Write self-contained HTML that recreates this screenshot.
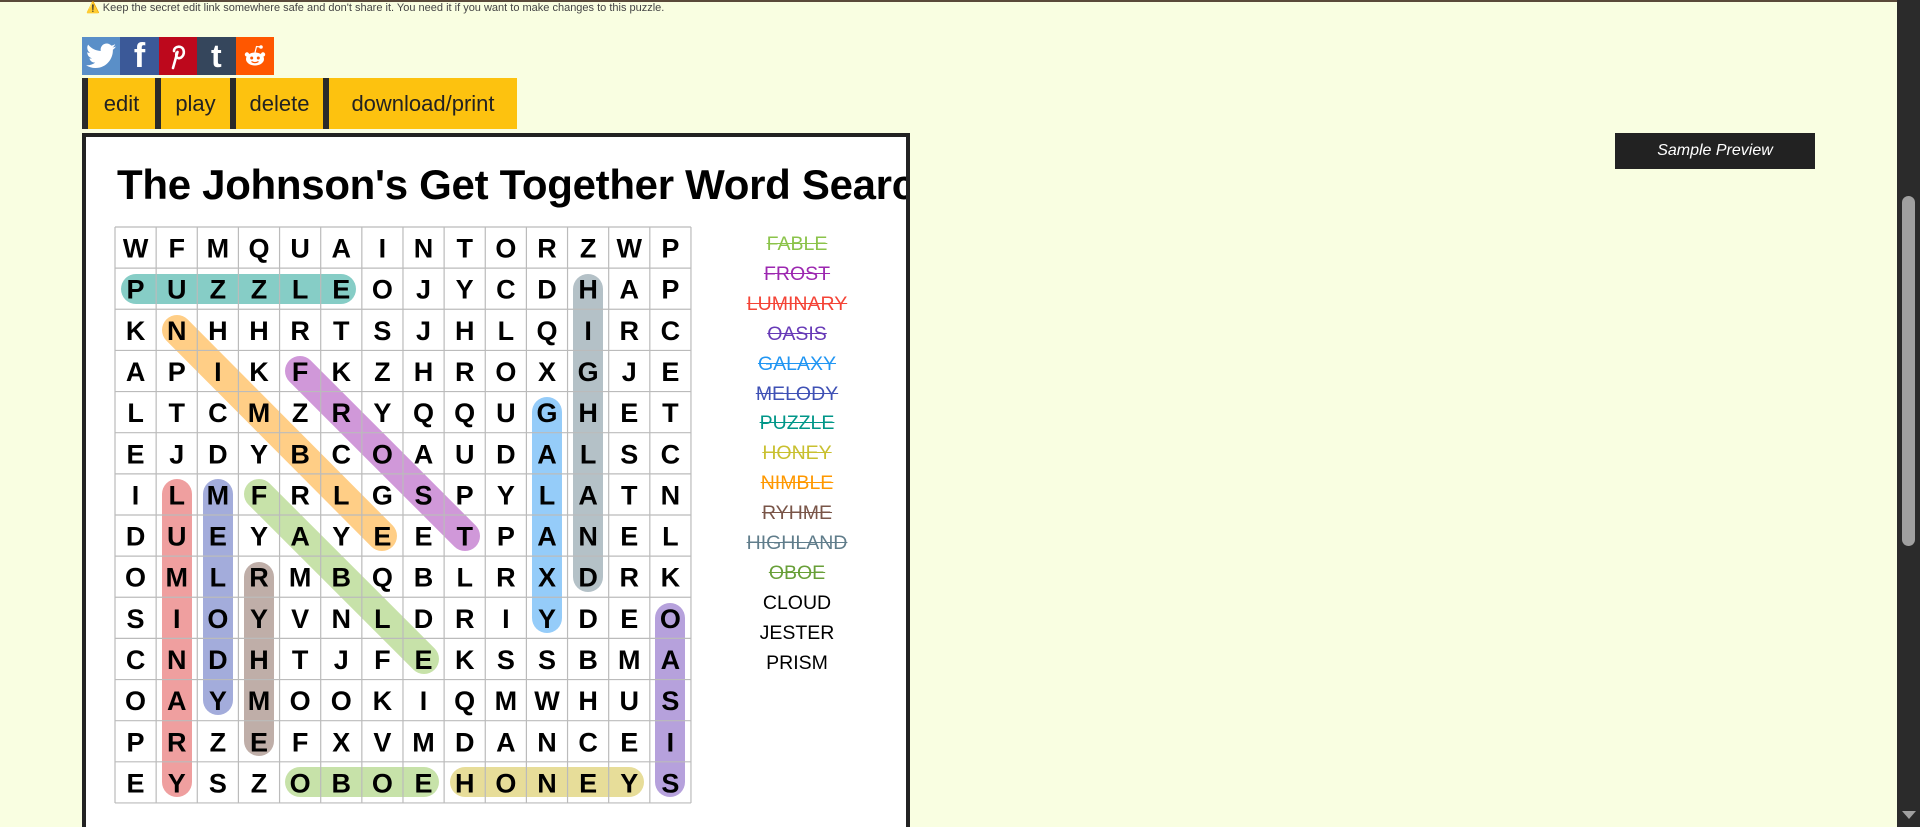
<!DOCTYPE html>
<html><head><meta charset="utf-8"><style>
html,body{margin:0;padding:0;width:1920px;height:827px;overflow:hidden;background:#f9fee1;font-family:"Liberation Sans",sans-serif;}
.abs{position:absolute;}
.topline{left:0;top:0;width:1897px;height:2px;background:#5a4a3a;}
.warn{left:86px;top:1px;font-size:11px;color:#444;}
.soc{top:37px;width:38.4px;height:38px;display:flex;align-items:center;justify-content:center;color:#fff;font-weight:bold;}
.btn{top:78px;height:51px;background:#fdc20f;border-left:6px solid #2a2a2a;box-sizing:border-box;font-size:22px;color:#222;display:flex;align-items:center;justify-content:center;}
.box{left:82px;top:133px;width:828px;height:694px;box-sizing:border-box;border:4px solid #222;border-bottom:none;background:#fff;overflow:hidden;}
.title{position:absolute;left:31px;top:24px;font-size:42px;font-weight:bold;color:#000;white-space:nowrap;letter-spacing:-0.3px;}
.sp{left:1615px;top:133px;width:200px;height:36px;background:#222;color:#fff;font-style:italic;font-size:16px;display:flex;align-items:center;justify-content:center;}
.sb{left:1897px;top:0;width:23px;height:827px;background:#2b2b2b;}
.thumb{left:1902px;top:196px;width:13px;height:350px;background:#a0a0a0;border-radius:7px;}
</style></head><body>
<div class="abs topline"></div>
<div class="abs warn">⚠️ Keep the secret edit link somewhere safe and don't share it. You need it if you want to make changes to this puzzle.</div>

<div class="abs soc" style="left:82px;background:#5a8fc8">
<svg width="30" height="26" viewBox="0 0 24 20"><path fill="#fff" d="M24 2.4c-.9.4-1.8.6-2.8.8 1-.6 1.8-1.6 2.2-2.7-1 .6-2 1-3.1 1.2C19.3.7 18 0 16.6 0c-2.7 0-4.9 2.2-4.9 4.9 0 .4 0 .8.1 1.1C7.7 5.8 4.1 3.9 1.7.9c-.4.7-.7 1.6-.7 2.5 0 1.7.9 3.2 2.2 4.1-.8 0-1.6-.2-2.2-.6v.1c0 2.4 1.7 4.4 3.9 4.8-.4.1-.8.2-1.3.2-.3 0-.6 0-.9-.1.6 2 2.4 3.4 4.6 3.4-1.7 1.3-3.8 2.1-6.1 2.1-.4 0-.8 0-1.2-.1C2.2 18.8 4.8 19.6 7.5 19.6c9.1 0 14-7.5 14-14v-.6c1-.7 1.8-1.6 2.5-2.6z"/></svg></div>
<div class="abs soc" style="left:120.4px;background:#3b5998;font-size:34px;">f</div>
<div class="abs soc" style="left:158.8px;background:#bd081c;">
<svg width="20" height="28" viewBox="0 0 20 28"><path d="M6 9 C6 4 14 3 15.5 8 C17 13 13 17 10 16 C8 15.5 8 13 8.5 11 M9.5 10 L5 26" stroke="#fff" stroke-width="2.6" fill="none" stroke-linecap="round"/></svg></div>
<div class="abs soc" style="left:197.2px;background:#35465c;font-size:32px;">t</div>
<div class="abs soc" style="left:235.6px;background:#ff5700;">
<svg width="24" height="24" viewBox="0 0 24 24"><ellipse cx="12" cy="15" rx="9" ry="6.5" fill="#fff"/><circle cx="4" cy="10.5" r="2.2" fill="#fff"/><circle cx="20" cy="10.5" r="2.2" fill="#fff"/><circle cx="18" cy="3" r="1.8" fill="#fff"/><path d="M12 8.5 L13.5 2.5 L18 3" stroke="#fff" stroke-width="1.2" fill="none"/><circle cx="8.7" cy="14" r="1.5" fill="#ff5700"/><circle cx="15.3" cy="14" r="1.5" fill="#ff5700"/><path d="M8.5 17.5 Q12 19.8 15.5 17.5" stroke="#ff5700" stroke-width="1.2" fill="none"/></svg></div>

<div class="abs btn" style="left:82px;width:73px;">edit</div>
<div class="abs btn" style="left:155px;width:75px;">play</div>
<div class="abs btn" style="left:230px;width:93px;">delete</div>
<div class="abs btn" style="left:323px;width:194px;">download/print</div>

<div class="abs box"><div class="title">The Johnson's Get Together Word Search</div></div>

<svg class="abs" style="left:0;top:0" width="1920" height="827">
<g stroke-linecap="round" stroke-width="30" opacity="0.95">
<line x1="136" y1="289" x2="341" y2="289" stroke="#80cbc4"/>
<line x1="588" y1="289" x2="588" y2="577" stroke="#b0bec5"/>
<line x1="177" y1="330" x2="382" y2="536" stroke="#ffcc80"/>
<line x1="300" y1="371" x2="465" y2="536" stroke="#ce93d8"/>
<line x1="547" y1="412" x2="547" y2="618" stroke="#90caf9"/>
<line x1="177" y1="494" x2="177" y2="782" stroke="#ef9a9a"/>
<line x1="218" y1="494" x2="218" y2="700" stroke="#9fa8da"/>
<line x1="259" y1="494" x2="424" y2="659" stroke="#c5e1a5"/>
<line x1="259" y1="577" x2="259" y2="741" stroke="#bcaaa4"/>
<line x1="670" y1="618" x2="670" y2="782" stroke="#b39ddb"/>
<line x1="300" y1="782" x2="424" y2="782" stroke="#c5e1a5"/>
<line x1="465" y1="782" x2="629" y2="782" stroke="#e6dc94"/>
</g>
<g stroke="#bbb" stroke-width="1.2" id="gl"></g>
<g id="lt" font-family="Liberation Sans" font-weight="bold" font-size="27" text-anchor="middle" fill="#000"></g>
</svg>
<script>
var rows=["WFMQUAINTORZWP","PUZZLEOJYCDHAP","KNHHRTSJHLQIRC","APIKFKZHROXGJE","LTCMZRYQQUGHET","EJDYBCOAUDALSC","ILMFRLGSPYLATN","DUEYAYEETPANEL","OMLRMBQBLRXDRK","SIOYVNLDRIYDEO","CNDHTJFEKSSBMA","OAYMOOKIQMWHUS","PRZEFXVMDANCEI","EYSZOBOEHONEYS"];
var x0=115,y0=227,c=41.14,ns="http://www.w3.org/2000/svg",gl=document.getElementById('gl'),lt=document.getElementById('lt');
for(var i=0;i<=14;i++){var l=document.createElementNS(ns,'line');l.setAttribute('x1',x0+i*c);l.setAttribute('x2',x0+i*c);l.setAttribute('y1',y0);l.setAttribute('y2',y0+14*c);gl.appendChild(l);
l=document.createElementNS(ns,'line');l.setAttribute('y1',y0+i*c);l.setAttribute('y2',y0+i*c);l.setAttribute('x1',x0);l.setAttribute('x2',x0+14*c);gl.appendChild(l);}
for(var r=0;r<14;r++)for(var k=0;k<14;k++){var t=document.createElementNS(ns,'text');t.setAttribute('x',x0+k*c+c/2);t.setAttribute('y',y0+r*c+c/2+10);t.textContent=rows[r][k];lt.appendChild(t);}
</script>

<div class="abs" style="left:697px;top:230px;width:200px;text-align:center;font-size:19.5px;line-height:29.9px;">
<div style="color:#8bc34a;text-decoration:line-through">FABLE</div>
<div style="color:#9c27b0;text-decoration:line-through">FROST</div>
<div style="color:#f44336;text-decoration:line-through">LUMINARY</div>
<div style="color:#673ab7;text-decoration:line-through">OASIS</div>
<div style="color:#2196f3;text-decoration:line-through">GALAXY</div>
<div style="color:#3f51b5;text-decoration:line-through">MELODY</div>
<div style="color:#009688;text-decoration:line-through">PUZZLE</div>
<div style="color:#c9c030;text-decoration:line-through">HONEY</div>
<div style="color:#ff9800;text-decoration:line-through">NIMBLE</div>
<div style="color:#795548;text-decoration:line-through">RYHME</div>
<div style="color:#607d8b;text-decoration:line-through">HIGHLAND</div>
<div style="color:#689f38;text-decoration:line-through">OBOE</div>
<div>CLOUD</div><div>JESTER</div><div>PRISM</div>
</div>

<div class="abs sp">Sample Preview</div>
<div class="abs sb"></div><div class="abs thumb"></div>
<div class="abs" style="left:1902px;top:811px;width:0;height:0;border-left:7px solid transparent;border-right:7px solid transparent;border-top:8px solid #a0a0a0;"></div>
</body></html>
